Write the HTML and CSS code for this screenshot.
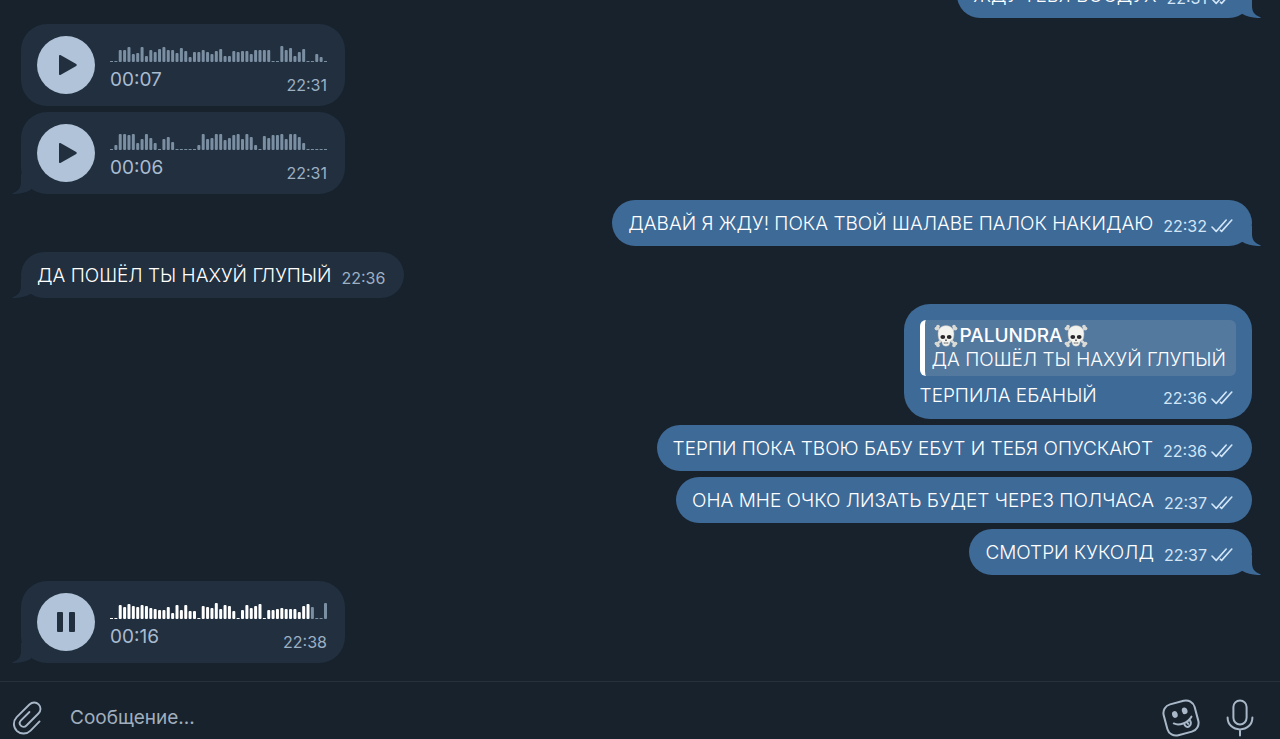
FILE: index.html
```
<!DOCTYPE html>
<html lang="ru">
<head>
    <meta charset="UTF-8">
    <meta name="viewport" content="width=device-width, initial-scale=1.0">
    <title>Чат</title>
    <link rel="stylesheet" href="styles.css">
</head>
<body>

<!-- Shared shapes -->
<svg class="defs" aria-hidden="true">
    <symbol id="tail" viewBox="0 0 30 20">
        <path d="M20 0 V8 C20 13 22 17 28.4 19.3 Q29 20 28 20 C22 20.2 15 19 10 15.8 L10 0 Z"/>
    </symbol>
    <symbol id="checks" viewBox="0 0 22 14">
        <path d="M1 8 L5.2 12.4 L15.2 1 M10.6 12.4 L20.8 1 M9.4 11.2 L10.6 12.4" fill="none" stroke="currentColor" stroke-width="1.6" stroke-linecap="round" stroke-linejoin="round"/>
    </symbol>
    <symbol id="play" viewBox="0 0 20 22">
        <path d="M1 2 Q1 0.4 2.4 1.1 L18.2 10 Q19.6 11 18.2 12 L2.4 20.9 Q1 21.6 1 20 Z"/>
    </symbol>
    <symbol id="skull" viewBox="0 0 24 24">
        <g stroke="#d9d9d6" stroke-width="2.4" stroke-linecap="round">
            <path d="M3 4 L21 20 M21 4 L3 20"/>
        </g>
        <g fill="#d9d9d6">
            <circle cx="2.4" cy="4.6" r="1.8"/><circle cx="4" cy="2.6" r="1.8"/>
            <circle cx="21.6" cy="4.6" r="1.8"/><circle cx="20" cy="2.6" r="1.8"/>
            <circle cx="2.4" cy="19.6" r="1.8"/><circle cx="4" cy="21.4" r="1.8"/>
            <circle cx="21.6" cy="19.6" r="1.8"/><circle cx="20" cy="21.4" r="1.8"/>
        </g>
        <path d="M12 1.6 C6.6 1.6 4 5.4 4 9.8 C4 12.4 4.4 15.4 5.6 16.2 C6.6 16.8 7.6 16.8 7.9 18 C8.2 20.2 9 22.2 12 22.2 C15 22.2 15.8 20.2 16.1 18 C16.4 16.8 17.4 16.8 18.4 16.2 C19.6 15.4 20 12.4 20 9.8 C20 5.4 17.4 1.6 12 1.6 Z" fill="#f3f3f0" stroke="#aaaeb2" stroke-width="0.5"/>
        <ellipse cx="8.8" cy="13" rx="2.4" ry="2.1" fill="#28282a"/>
        <ellipse cx="15.2" cy="13" rx="2.4" ry="2.1" fill="#28282a"/>
        <path d="M12 14.6 L11 17 L13 17 Z" fill="#4a4a4c"/>
        <path d="M9.4 19 H14.6 M10.6 18.2 V20 M12 18.2 V20.2 M13.4 18.2 V20" stroke="#7c7c7c" stroke-width="0.6"/>
    </symbol>
</svg>

<main class="messages">
    <article class="bubble out">
        <p class="text">ЖДУ ТЕБЯ ВОСДУХ</p>
        <div class="meta"><time>22:31</time><svg class="checks"><use href="#checks"/></svg></div>
        <svg class="tail"><use href="#tail"/></svg>
    </article>

    <article class="bubble in voice">
        <button class="toggle" aria-label="Воспроизвести"><svg class="play"><use href="#play"/></svg></button>
        <div class="track">
            <svg class="wave" viewBox="0 0 217 17" data-played="0" data-bars="1,1,12,12,15,8,9,15,6,12,10,13,15,12,12,9,14,11,5,10,10,12,10,8,11,13,6,6,11,10,11,11,8,12,12,12,12,1,1,16,12,14,6,10,13,1,1,8,5,1"></svg>
            <div class="info"><span class="duration">00:07</span><time>22:31</time></div>
        </div>
    </article>

    <article class="bubble in voice">
        <button class="toggle" aria-label="Воспроизвести"><svg class="play"><use href="#play"/></svg></button>
        <div class="track">
            <svg class="wave" viewBox="0 0 217 17" data-played="0" data-bars="1,5,16,16,15,16,7,11,16,12,7,1,11,13,8,1,1,1,1,1,5,16,11,12,16,16,10,12,15,16,11,16,13,5,1,14,12,15,15,16,11,16,16,13,7,1,1,1,1,1"></svg>
            <div class="info"><span class="duration">00:06</span><time>22:31</time></div>
        </div>
        <svg class="tail"><use href="#tail"/></svg>
    </article>

    <article class="bubble out">
        <p class="text">ДАВАЙ Я ЖДУ! ПОКА ТВОЙ ШАЛАВЕ ПАЛОК НАКИДАЮ</p>
        <div class="meta"><time>22:32</time><svg class="checks"><use href="#checks"/></svg></div>
        <svg class="tail"><use href="#tail"/></svg>
    </article>

    <article class="bubble in">
        <p class="text">ДА ПОШЁЛ ТЫ НАХУЙ ГЛУПЫЙ</p>
        <div class="meta"><time>22:36</time></div>
        <svg class="tail"><use href="#tail"/></svg>
    </article>

    <article class="bubble out reply">
        <blockquote class="quote">
            <div class="author"><svg class="skull"><use href="#skull"/></svg><span>PALUNDRA</span><svg class="skull"><use href="#skull"/></svg></div>
            <p class="text">ДА ПОШЁЛ ТЫ НАХУЙ ГЛУПЫЙ</p>
        </blockquote>
        <div class="line">
            <p class="text">ТЕРПИЛА ЕБАНЫЙ</p>
            <div class="meta"><time>22:36</time><svg class="checks"><use href="#checks"/></svg></div>
        </div>
    </article>

    <article class="bubble out">
        <p class="text">ТЕРПИ ПОКА ТВОЮ БАБУ ЕБУТ И ТЕБЯ ОПУСКАЮТ</p>
        <div class="meta"><time>22:36</time><svg class="checks"><use href="#checks"/></svg></div>
    </article>

    <article class="bubble out">
        <p class="text">ОНА МНЕ ОЧКО ЛИЗАТЬ БУДЕТ ЧЕРЕЗ ПОЛЧАСА</p>
        <div class="meta"><time>22:37</time><svg class="checks"><use href="#checks"/></svg></div>
    </article>

    <article class="bubble out">
        <p class="text">СМОТРИ КУКОЛД</p>
        <div class="meta"><time>22:37</time><svg class="checks"><use href="#checks"/></svg></div>
        <svg class="tail"><use href="#tail"/></svg>
    </article>

    <article class="bubble in voice">
        <button class="toggle" aria-label="Пауза">
            <svg class="pause" viewBox="0 0 18 20"><rect width="6" height="20" rx="1"/><rect x="12" width="6" height="20" rx="1"/></svg>
        </button>
        <div class="track">
            <svg class="wave" viewBox="0 0 217 17" data-played="46" data-bars="1,1,14,12,15,13,12,14,13,11,10,9,9,12,6,14,9,14,8,8,1,13,12,11,16,10,14,13,8,1,9,14,11,13,15,1,9,9,10,11,10,10,10,7,13,15,12,1,1,16"></svg>
            <div class="info"><span class="duration">00:16</span><time>22:38</time></div>
        </div>
        <svg class="tail"><use href="#tail"/></svg>
    </article>
</main>

<form class="composer">
    <button type="button" class="icon" aria-label="Прикрепить">
        <svg class="clip" viewBox="0 0 32 36"><path d="M29.4 21.6 L19.8 31.4 C15.8 35.4 9.4 35.6 5.2 31.8 C1 27.6 1 21.2 5 17 L18.6 3.6 C21.6 0.8 25.8 0.8 28.4 3.4 C31.2 6.2 31 10.4 28.2 13.2 L15.4 26 C13.6 27.8 11 27.8 9.4 26.2 C7.8 24.6 8 22.2 9.6 20.6 L18.6 11.6"/></svg>
    </button>
    <input type="text" class="field" placeholder="Сообщение..." aria-label="Сообщение">
    <button type="button" class="icon" aria-label="Стикеры">
        <svg class="sticker" viewBox="0 0 38 38">
            <g transform="rotate(-15 19 19)">
                <rect x="3" y="3" width="32" height="32" rx="9"/>
                <ellipse class="eye" cx="14" cy="14" rx="1.8" ry="2.4"/>
                <ellipse class="eye" cx="24.4" cy="13" rx="1.8" ry="2.4"/>
                <path d="M10.6 22.4 C15 26 24 26 29.4 20.4 M20.6 24.8 C20.4 28.6 22.6 30 25 29 C27.8 27.8 27.8 25 26.6 22.8 M23.4 24.2 L24.4 26.6"/>
            </g>
        </svg>
    </button>
    <button type="button" class="icon" aria-label="Голосовое сообщение">
        <svg class="mic" viewBox="0 0 28 38"><rect x="7.4" y="1.4" width="13.2" height="24" rx="6.6"/><path d="M1.6 18.4 C1.6 25.6 7 30.4 14 30.4 C21 30.4 26.4 25.6 26.4 18.4 M14 30.4 V36.6"/></svg>
    </button>
</form>

<script>
    // Build the bars of every waveform
    document.querySelectorAll('.wave').forEach(wave => {
        const bars = wave.dataset.bars.split(',').map(Number);
        const played = Number(wave.dataset.played);
        const step = (217 - 3) / (bars.length - 1);
        bars.forEach((height, i) => {
            const bar = document.createElementNS('http://www.w3.org/2000/svg', 'rect');
            bar.setAttribute('x', i * step);
            bar.setAttribute('y', 17 - height);
            bar.setAttribute('width', 3);
            bar.setAttribute('height', height);
            bar.setAttribute('rx', height > 1 ? 1 : 0);
            if (i < played) {
                bar.setAttribute('class', 'played');
            }
            wave.appendChild(bar);
        });
    });
</script>

</body>
</html>
```

FILE: styles.css
```
* {
    box-sizing: border-box;
}
body {
    display: flex;
    flex-direction: column;
    height: 100vh;
    margin: 0;
    overflow: hidden;
    font-family: Inter, "Liberation Sans", sans-serif;
    font-size: 19px;
    line-height: 24px;
    color: #fff;
    background-color: #18222c;
}
p, blockquote {
    margin: 0;
}
button {
    padding: 0;
    border: 0;
    background: none;
    cursor: pointer;
}
svg {
    display: block;
    flex: none;
}
.defs {
    position: absolute;
    width: 0;
    height: 0;
}

/* Messages */
.messages {
    flex: 1;
    min-height: 0;
    display: flex;
    flex-direction: column;
    justify-content: flex-end;
    gap: 6px;
    padding: 0 28px 18px 21px;
}
.bubble {
    position: relative;
    flex: none;
    display: flex;
    gap: 10px;
    max-width: 80%;
    padding: 12px 19px 10px 16px;
    border-radius: 23px;
}
.text {
    font-weight: 300;
}
.in {
    align-self: flex-start;
    background-color: #212f3f;
    fill: #212f3f;
}
.out {
    align-self: flex-end;
    background-color: #3e6a97;
    fill: #3e6a97;
}
.tail {
    position: absolute;
    bottom: 0;
    width: 30px;
    height: 20px;
}
.out .tail {
    right: -10px;
}
.in .tail {
    left: -10px;
    transform: scaleX(-1);
}
.meta {
    display: flex;
    align-items: center;
    align-self: flex-end;
    gap: 4px;
    margin-bottom: -2px;
    color: #d3e6f8;
}
time {
    font-size: 16px;
}
.in time {
    color: #9dafc3;
}
.checks {
    width: 22px;
    height: 14px;
}

/* Voice message */
.voice {
    gap: 15px;
    padding: 12px 18px 12px 16px;
    border-radius: 26px;
}
.toggle {
    display: flex;
    align-items: center;
    justify-content: center;
    width: 58px;
    height: 58px;
    border-radius: 50%;
    background-color: #b1c3d8;
    fill: #212f3f;
}
.play {
    width: 20px;
    height: 22px;
    margin-left: 4px;
}
.pause {
    width: 18px;
    height: 20px;
}
.track {
    padding-top: 9px;
}
.wave {
    width: 217px;
    height: 17px;
    fill: #7b8fa3;
}
.played {
    fill: #fff;
}
.info {
    display: flex;
    justify-content: space-between;
    padding-top: 6px;
}
.info time {
    padding-top: 8px;
    line-height: 18px;
}
.duration {
    color: #a9bbcf;
}

/* Reply */
.reply {
    flex-direction: column;
    gap: 8px;
    padding: 16px 16px 11px;
    border-radius: 26px;
}
.quote {
    padding: 4px 10px 4px 7px;
    border-left: 5px solid #fff;
    border-radius: 6px;
    background-color: #54799f;
}
.author {
    display: flex;
    align-items: center;
    font-weight: 500;
}
.skull {
    width: 24px;
    height: 24px;
    margin: 0 2px;
}
.line {
    display: flex;
    justify-content: space-between;
    padding-right: 3px;
}

/* Composer */
.composer {
    display: flex;
    align-items: center;
    height: 58px;
    padding: 14px 26px 0 12px;
    border-top: 1px solid #25313d;
}
.icon svg {
    fill: none;
    stroke: #a9b8c8;
    stroke-width: 2;
    stroke-linecap: round;
    stroke-linejoin: round;
}
.clip {
    width: 30px;
    height: 34px;
}
.field {
    flex: 1;
    min-width: 0;
    padding: 0 28px;
    border: 0;
    outline: 0;
    background: none;
    font: inherit;
    color: #fff;
}
.field::placeholder {
    color: #a0afbf;
    opacity: 1;
}
.sticker {
    width: 38px;
    height: 38px;
    margin-right: 26px;
}
.sticker .eye {
    fill: #a9b8c8;
}
.mic {
    width: 28px;
    height: 38px;
}
```
